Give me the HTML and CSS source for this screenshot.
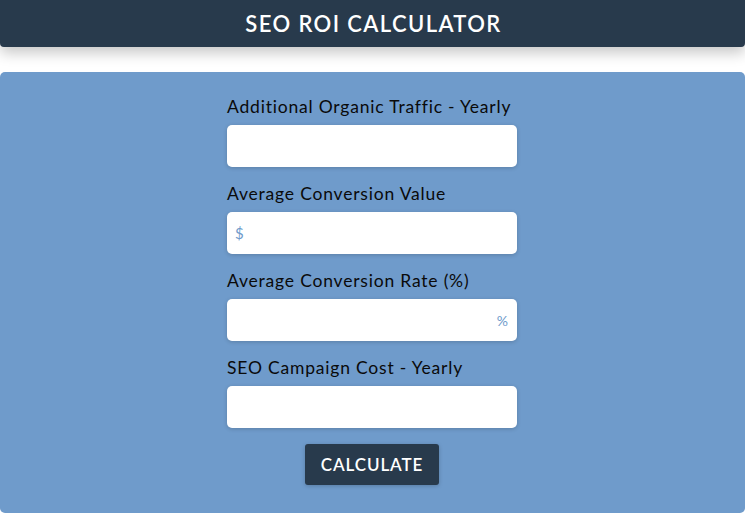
FILE: index.html
```html
<!DOCTYPE html>
<html>
<head>
<meta charset="utf-8">
<link rel="stylesheet" href="styles.css">
</head>
<body>
<header class="topbar"><h1 class="title">SEO ROI CALCULATOR</h1></header>
<main class="panel">
  <form class="form">
    <div class="group">
      <label class="label">Additional Organic Traffic - Yearly</label>
      <div class="field"><input class="input" type="text"></div>
    </div>
    <div class="group">
      <label class="label">Average Conversion Value</label>
      <div class="field"><span class="prefix">$</span><input class="input" type="text"></div>
    </div>
    <div class="group">
      <label class="label">Average Conversion Rate (%)</label>
      <div class="field"><input class="input" type="text"><span class="suffix">%</span></div>
    </div>
    <div class="group">
      <label class="label">SEO Campaign Cost - Yearly</label>
      <div class="field"><input class="input" type="text"></div>
    </div>
    <div class="actions"><button class="btn" type="button">CALCULATE</button></div>
  </form>
</main>
</body>
</html>
```
FILE: styles.css
```css
* { box-sizing: border-box; }
html, body { margin: 0; padding: 0; background: #fff; }
body { font-family: Lato, "Noto Sans", sans-serif; overflow: hidden; }
.topbar {
  height: 47px;
  background: #283a4c;
  border-radius: 0 0 4px 4px;
  box-shadow: 0 6px 14px rgba(0,0,0,0.22);
  display: flex;
  align-items: center;
  justify-content: center;
}
.title {
  margin: 0;
  color: #fff;
  font-size: 22px;
  font-weight: 600;
  letter-spacing: 1.4px;
  padding-left: 2px;
}
.panel {
  margin-top: 25px;
  background: #6f9bcb;
  border-radius: 5px;
  height: 441px;
  padding-top: 25px;
  display: flex;
}
.form { width: 290px; margin-left: 227px; display: flex; flex-direction: column; }
.group { display: flex; flex-direction: column; gap: 8px; margin-bottom: 17px; }
.label { font-size: 17.5px; line-height: 20px; color: #0a0a0a; letter-spacing: 0.8px; white-space: nowrap; }
.field {
  position: relative;
  height: 42px;
  background: #fff;
  border-radius: 5px;
  box-shadow: 0 1px 4px rgba(0,0,0,0.18);
  display: flex;
  align-items: center;
}
.input {
  flex: 1;
  height: 100%;
  border: none;
  background: transparent;
  outline: none;
  padding: 0 10px;
  font: inherit;
}
.prefix { padding-left: 8px; color: #6f9bcb; font-size: 15px; }
.suffix { padding-right: 9px; color: #6f9bcb; font-size: 14px; }
.actions { display: flex; justify-content: center; margin-top: -1px; }
.btn {
  width: 134px;
  height: 41px;
  background: #283a4c;
  color: #fff;
  border: none;
  border-radius: 3px;
  font-family: inherit;
  font-size: 17px;
  font-weight: 600;
  letter-spacing: 0.9px;
  padding: 0;
  box-shadow: 0 1px 4px rgba(0,0,0,0.2);
}
```
